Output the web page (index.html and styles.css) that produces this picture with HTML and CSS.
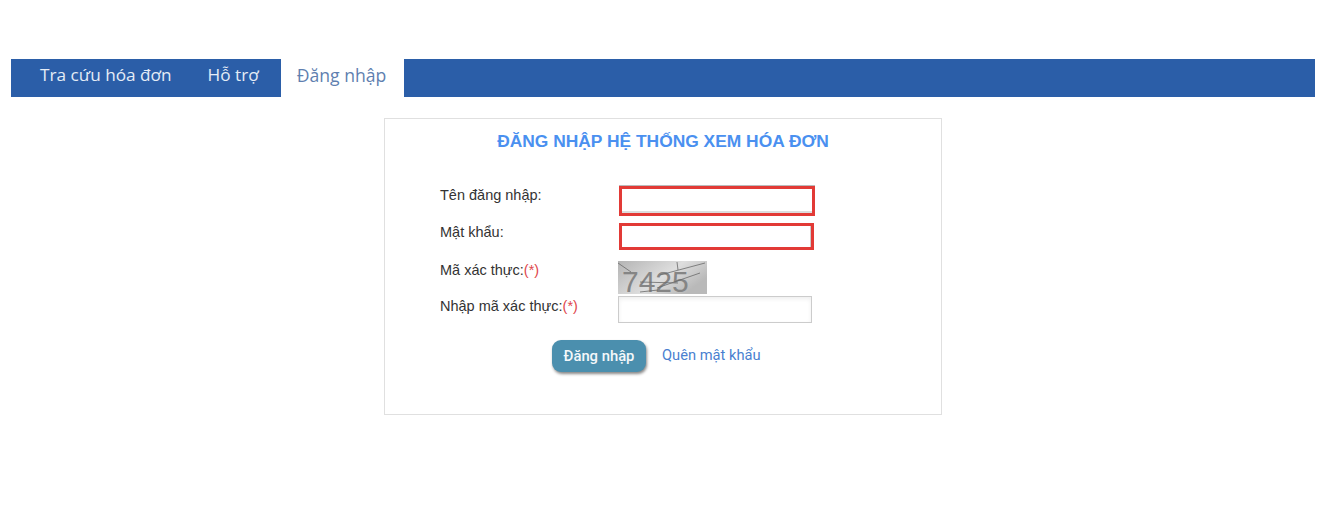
FILE: index.html
```html
<!DOCTYPE html>
<html lang="vi">
  <head>
    <meta charset="UTF-8" />
    <title>Đăng nhập</title>
    <link rel="stylesheet" href="styles.css">
  </head>
  <body>
    <nav class="menu">
      <a href="#" class="tab">Tra cứu hóa đơn</a>
      <a href="#" class="tab">Hỗ trợ</a>
      <a href="#" class="tab active">Đăng nhập</a>
    </nav>

    <main class="box">
      <h1>ĐĂNG NHẬP HỆ THỐNG XEM HÓA ĐƠN</h1>
      <form class="form">
        <label class="lbl">Tên đăng nhập:</label>
        <input class="field error user" type="text" />

        <label class="lbl">Mật khẩu:</label>
        <input class="field error pass" type="password" />

        <label class="lbl lbl-captcha">Mã xác thực:<span class="req">(*)</span></label>
        <svg class="captcha" width="89" height="38" viewBox="0 0 89 38">
          <defs>
            <linearGradient id="nen" x1="0" y1="0" x2="1" y2="0.5">
              <stop offset="0" stop-color="#b4b4b4" />
              <stop offset="0.6" stop-color="#dedede" />
              <stop offset="1" stop-color="#b9b9b9" />
            </linearGradient>
          </defs>
          <rect width="89" height="33" fill="url(#nen)" />
          <text x="4" y="31" class="captcha-text">7425</text>
          <g fill="none" stroke="#6a6a6a" stroke-width="0.8">
            <path d="M0 2 L13 11" />
            <path d="M42 14 L87 2" />
            <path d="M59 1 L60 9" />
            <path d="M39 27 L82 12" />
            <path d="M22 21 L60 22" />
            <path d="M22 31 L40 29" />
          </g>
        </svg>

        <label class="lbl lbl-code">Nhập mã xác thực:<span class="req">(*)</span></label>
        <input class="field code" type="text" />

        <div class="actions">
          <button type="button" class="btn">Đăng nhập</button>
          <a href="#" class="forgot">Quên mật khẩu</a>
        </div>
      </form>
    </main>
  </body>
</html>
```

FILE: styles.css
```css
* {
  box-sizing: border-box;
}

body {
  margin: 0;
  padding: 59px 7px 0 11px;
  background-color: #fff;
  font-family: "Liberation Sans", Arial, sans-serif;
  color: #333;
}

.menu {
  display: flex;
  height: 38px;
  padding-left: 11px;
  background-color: #2b5ea8;
}

.tab {
  padding: 0 18px;
  font-family: "Open Sans", sans-serif;
  font-size: 17.2px;
  line-height: 32px;
  color: #e4ecf6;
  text-decoration: none;
}

.tab:nth-child(2) {
  padding-right: 22px;
}

.tab.active {
  padding: 0 18px 0 16px;
  background-color: #fff;
  font-size: 17.6px;
  color: #5f7fb0;
}

.box {
  width: 558px;
  height: 297px;
  margin: 21px 0 0 373px;
  padding-top: 11px;
  border: 1px solid #e0e0e0;
}

h1 {
  margin: 0;
  font-size: 17.4px;
  line-height: 22px;
  font-weight: bold;
  text-align: center;
  color: #4a90f0;
}

.form {
  display: grid;
  grid-template-columns: 179px 197px;
  grid-template-rows: 30px 27px 32px 27px auto;
  row-gap: 7px;
  margin: 34px 0 0 55px;
  font-size: 14.5px;
}

.lbl {
  padding-top: 1px;
}

.lbl-captcha {
  padding-top: 5px;
}

.lbl-code {
  padding-top: 2px;
}

.req {
  color: #e0474c;
}

.field {
  display: block;
  height: 100%;
  background-color: #fff;
}

.field.error {
  border: 3px solid #e23a36;
}

.field.user {
  width: 196px;
  box-shadow: 0 -1px 0 #bbb, inset 0 -2px 0 #ddd;
}

.field.pass {
  width: 195px;
  box-shadow: inset -1px 0 0 #ccc;
}

.field.code {
  width: 194px;
  margin-left: -1px;
  border: 1px solid #ccc;
  box-shadow: inset 0 2px 4px #eee;
}

.captcha {
  display: block;
  margin: 4px 0 0 -1px;
}

.captcha-text {
  font-family: "Liberation Sans", sans-serif;
  font-size: 30px;
  fill: #858585;
}

.actions {
  grid-column: 1 / 3;
  display: flex;
  align-items: center;
  gap: 16px;
  margin: 10px 0 0 112px;
}

.btn {
  width: 94px;
  height: 32px;
  padding: 0;
  border: 0;
  border-radius: 9px;
  background-color: #4b8fae;
  box-shadow: 1px 2px 3px #888;
  font-family: "Roboto", sans-serif;
  font-size: 14.8px;
  font-weight: 500;
  color: #f4f8fa;
}

.forgot {
  margin-bottom: 2px;
  font-family: "Roboto", sans-serif;
  font-size: 14.7px;
  color: #4a7fd0;
  text-decoration: none;
}
```
